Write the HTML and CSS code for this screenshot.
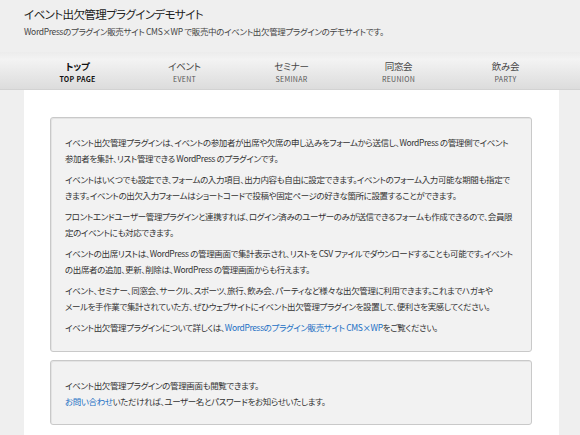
FILE: index.html
```html
<!DOCTYPE html>
<html lang="ja">
<head>
<meta charset="utf-8">
<title>イベント出欠管理プラグインデモサイト</title>
<link rel="stylesheet" href="styles.css">
</head>
<body>
<div class="page">
  <header class="header">
    <h1 class="site-title">イベント出欠管理プラグインデモサイト</h1>
    <p class="site-desc">WordPressのプラグイン販売サイト CMS×WP で販売中のイベント出欠管理プラグインのデモサイトです。</p>
  </header>
  <nav class="nav">
    <a class="nav-item current" href="#"><span class="nav-ja">トップ</span><span class="nav-en">TOP PAGE</span></a>
    <a class="nav-item" href="#"><span class="nav-ja">イベント</span><span class="nav-en">EVENT</span></a>
    <a class="nav-item" href="#"><span class="nav-ja">セミナー</span><span class="nav-en">SEMINAR</span></a>
    <a class="nav-item" href="#"><span class="nav-ja">同窓会</span><span class="nav-en">REUNION</span></a>
    <a class="nav-item" href="#"><span class="nav-ja">飲み会</span><span class="nav-en">PARTY</span></a>
  </nav>
  <main class="content">
    <section class="box">
      <p>イベント出欠管理プラグインは、イベントの参加者が出席や欠席の申し込みをフォームから送信し、WordPress の管理側でイベント<br>参加者を集計、リスト管理できる WordPress のプラグインです。</p>
      <p>イベントはいくつでも設定でき、フォームの入力項目、出力内容も自由に設定できます。イベントのフォーム入力可能な期間も指定で<br>きます。イベントの出欠入力フォームはショートコードで投稿や固定ページの好きな箇所に設置することができます。</p>
      <p>フロントエンドユーザー管理プラグインと連携すれば、ログイン済みのユーザーのみが送信できるフォームも作成できるので、会員限<br>定のイベントにも対応できます。</p>
      <p>イベントの出席リストは、WordPress の管理画面で集計表示され、リストを CSV ファイルでダウンロードすることも可能です。イベント<br>の出席者の追加、更新、削除は、WordPress の管理画面からも行えます。</p>
      <p>イベント、セミナー、同窓会、サークル、スポーツ、旅行、飲み会、パーティなど様々な出欠管理に利用できます。これまでハガキや<br>メールを手作業で集計されていた方、ぜひウェブサイトにイベント出欠管理プラグインを設置して、便利さを実感してください。</p>
      <p>イベント出欠管理プラグインについて詳しくは、<a href="#">WordPressのプラグイン販売サイト CMS×WP</a>をご覧ください。</p>
    </section>
    <section class="box">
      <p class="tight">イベント出欠管理プラグインの管理画面も閲覧できます。<br><a href="#">お問い合わせ</a>いただければ、ユーザー名とパスワードをお知らせいたします。</p>
    </section>
  </main>
</div>
</body>
</html>
```

FILE: styles.css
```css
html, body {
  margin: 0;
  padding: 0;
}
body {
  background: #efefef;
  color: #333;
  font-family: "Noto Sans CJK JP", "Noto Sans", sans-serif;
  font-feature-settings: "palt";
  height: 435px;
  overflow: hidden;
}
a {
  color: #1a6fc4;
  text-decoration: none;
}
.page {
  width: 535px;
  margin-left: 24px;
}
.header {
  height: 52px;
  padding-top: 5px;
  box-sizing: border-box;
}
.site-title {
  margin: 0;
  font-size: 11.5px;
  letter-spacing: -0.6px;
  font-weight: normal;
  line-height: 18px;
  color: #222;
}
.site-desc {
  margin: 0;
  font-size: 8.5px;
  letter-spacing: -0.35px;
  line-height: 16px;
  color: #444;
}
.nav {
  display: grid;
  grid-template-columns: repeat(5, 1fr);
  height: 38px;
  margin-left: -24px;
  margin-right: -21px;
  padding: 0 21px 0 24px;
  background: linear-gradient(#ececec, #f3f3f3 20%, #dcdcdc);
  border-bottom: 1px solid #d2d2d2;
  box-sizing: border-box;
}
.nav-item {
  display: flex;
  flex-direction: column;
  align-items: center;
  padding-top: 8px;
  color: #444;
}
.nav-ja {
  font-size: 9.5px;
  letter-spacing: -0.3px;
  line-height: 13px;
}
.nav-en {
  font-size: 7px;
  line-height: 12px;
  letter-spacing: 0.3px;
  color: #555;
}
.current .nav-ja,
.current .nav-en {
  font-weight: bold;
  color: #111;
}
.content {
  background: #fff;
  padding: 27px 27px 12px 26px;
  min-height: 400px;
}
.box {
  background: #f2f2f2;
  border: 1px solid #c9c9c9;
  border-radius: 3px;
  padding: 16px 14px 11px;
  margin-bottom: 8px;
  box-shadow: inset 1px 1px 0 #e4e4e4;
}
.box p {
  margin: 0 0 5px;
  font-size: 8.5px;
  letter-spacing: -0.38px;
  line-height: 16px;
  white-space: nowrap;
}
.box p.tight {
  margin: 0 0 4px;
}
```
